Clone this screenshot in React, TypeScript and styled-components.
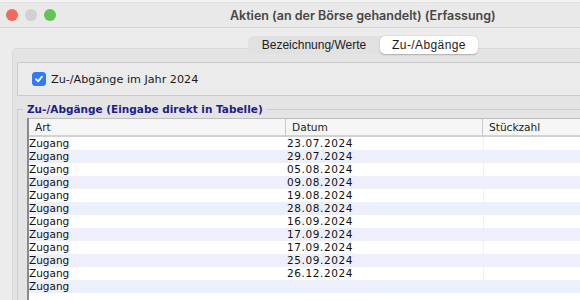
import React from "react";
import styled, { createGlobalStyle } from "styled-components";

const GlobalStyle = createGlobalStyle`
  html, body {
    margin: 0;
    padding: 0;
    background: #ececec;
    overflow: hidden;
  }
  body {
    font-family: "DejaVu Sans", sans-serif;
  }
`;

const Screen = styled.div`
  width: 580px;
  height: 300px;
  overflow: hidden;
  display: flex;
  flex-direction: column;
  background: #ececec;
`;

// strip of the desktop menu bar that peeks out above the window
const MenuStrip = styled.div`
  height: 3px;
  flex-shrink: 0;
  background: #f3f3f3;
  border-bottom: 1px solid #e2e2e2;
  box-sizing: border-box;
`;

const TitleBar = styled.div`
  height: 24px;
  flex-shrink: 0;
  display: flex;
  align-items: center;
  padding-left: 6px;
  background: #e9e9e9;
  border-bottom: 1px solid #d4d4d4;
`;

const Lights = styled.div`
  display: flex;
  gap: 7px;
`;

const Light = styled.span<{ $color: string }>`
  width: 12px;
  height: 12px;
  border-radius: 50%;
  background: ${(p) => p.$color};
`;

const Title = styled.div`
  margin-left: 174px;
  font-family: "Inter", sans-serif;
  font-weight: 600;
  font-size: 12.5px;
  color: #464646;
  white-space: nowrap;
`;

const TabRow = styled.div`
  display: flex;
  padding-left: 248px;
  margin-top: 8px;
  margin-bottom: -6px;
  position: relative;
  z-index: 1;
`;

const Segmented = styled.div`
  display: flex;
  background: #e1e1e1;
  border-radius: 5px;
`;

const Tab = styled.div<{ $active?: boolean; $width: number }>`
  width: ${(p) => p.$width}px;
  height: 18px;
  display: flex;
  align-items: center;
  justify-content: center;
  border-radius: 5px;
  font-family: "Liberation Sans", sans-serif;
  font-size: 12px;
  letter-spacing: ${(p) => (p.$active ? "0.4px" : "0")};
  color: #1d1d1d;
  background: ${(p) => (p.$active ? "#ffffff" : "transparent")};
  box-shadow: ${(p) => (p.$active ? "0 0.5px 1.5px rgba(0,0,0,0.25)" : "none")};
`;

const Panel = styled.div`
  flex: 1;
  width: 680px;
  margin-left: 12px;
  padding: 13px 0 0 4px;
  background: #e4e4e4;
  border-top: 1px solid #d9d9d9;
  border-left: 1px solid #d9d9d9;
  border-top-left-radius: 5px;
  display: flex;
  flex-direction: column;
`;

const GroupBox = styled.div`
  height: 32px;
  display: flex;
  align-items: center;
  padding-left: 14px;
  background: #ebebeb;
  border: 1px solid #cbcbcb;
`;

const Check = styled.span`
  width: 14px;
  height: 14px;
  border-radius: 3.5px;
  background: #2f7cf6;
  display: flex;
  align-items: center;
  justify-content: center;
  margin-right: 5px;
`;

const CheckLabel = styled.span`
  font-size: 11.2px;
  color: #1a1a1a;
`;

const Fieldset = styled.fieldset`
  flex: 1;
  margin: 7px 0 0 0;
  padding: 0 0 0 9px;
  border: none;
  border-top: 1px solid #cdcdcd;
  border-left: 1px solid #cdcdcd;
  display: flex;
  flex-direction: column;
  min-width: 0;
`;

const Legend = styled.legend`
  margin-left: -4px;
  padding: 0 4px;
  font-weight: bold;
  font-size: 10.5px;
  line-height: 13px;
  color: #1d1d8c;
`;

const TableArea = styled.div`
  flex: 1;
  margin-top: 2px;
  background: #ffffff;
  border-left: 2px solid #8a8a8a;
`;

const Table = styled.table`
  width: 660px;
  table-layout: fixed;
  border-collapse: separate;
  border-spacing: 0;
`;

const Th = styled.th<{ $last?: boolean }>`
  height: 16px;
  padding: 0 0 0 6px;
  text-align: left;
  font-weight: normal;
  font-size: 10.6px;
  color: #222;
  background: #f6f6f6;
  border-top: 1px solid #bdbdbd;
  border-bottom: 2px solid #d2d2d2;
  border-right: ${(p) => (p.$last ? "none" : "1px solid #c9c9c9")};
`;

const Tr = styled.tr<{ $odd: boolean }>`
  background: ${(p) => (p.$odd ? "#edf0fb" : "#ffffff")};
`;

const Td = styled.td<{ $date?: boolean; $last?: boolean }>`
  height: 13px;
  padding: 0 0 0 ${(p) => (p.$date ? 1 : 0)}px;
  font-size: 10.5px;
  line-height: 13px;
  color: #111;
  letter-spacing: ${(p) => (p.$date ? "0.6px" : "0")};
  white-space: nowrap;
  border-left: ${(p) => (p.$last ? "1px solid #eef0f7" : "none")};
`;

const dates = [
  "23.07.2024",
  "29.07.2024",
  "05.08.2024",
  "09.08.2024",
  "19.08.2024",
  "28.08.2024",
  "16.09.2024",
  "17.09.2024",
  "17.09.2024",
  "25.09.2024",
  "26.12.2024",
  "",
];

export default function App() {
  return (
    <>
      <GlobalStyle />
      <Screen>
        <MenuStrip />
        <TitleBar>
          <Lights>
            <Light $color="#ee6a5f" />
            <Light $color="#d1d1d1" />
            <Light $color="#61c454" />
          </Lights>
          <Title>Aktien (an der Börse gehandelt) (Erfassung)</Title>
        </TitleBar>
        <TabRow>
          <Segmented>
            <Tab $width={132}>Bezeichnung/Werte</Tab>
            <Tab $width={98} $active>
              Zu-/Abgänge
            </Tab>
          </Segmented>
        </TabRow>
        <Panel>
          <GroupBox>
            <Check>
              <svg width="10" height="10" viewBox="0 0 10 10">
                <path
                  d="M2 5.2 L4.1 7.4 L8 2.6"
                  fill="none"
                  stroke="#fff"
                  strokeWidth="1.8"
                  strokeLinecap="round"
                  strokeLinejoin="round"
                />
              </svg>
            </Check>
            <CheckLabel>Zu-/Abgänge im Jahr 2024</CheckLabel>
          </GroupBox>
          <Fieldset>
            <Legend>Zu-/Abgänge (Eingabe direkt in Tabelle)</Legend>
            <TableArea>
              <Table>
                <colgroup>
                  <col style={{ width: 257 }} />
                  <col style={{ width: 197 }} />
                  <col style={{ width: 206 }} />
                </colgroup>
                <thead>
                  <tr>
                    <Th>Art</Th>
                    <Th>Datum</Th>
                    <Th $last>Stückzahl</Th>
                  </tr>
                </thead>
                <tbody>
                  {dates.map((d, i) => (
                    <Tr key={i} $odd={i % 2 === 1}>
                      <Td>Zugang</Td>
                      <Td $date>{d}</Td>
                      <Td $last />
                    </Tr>
                  ))}
                </tbody>
              </Table>
            </TableArea>
          </Fieldset>
        </Panel>
      </Screen>
    </>
  );
}
